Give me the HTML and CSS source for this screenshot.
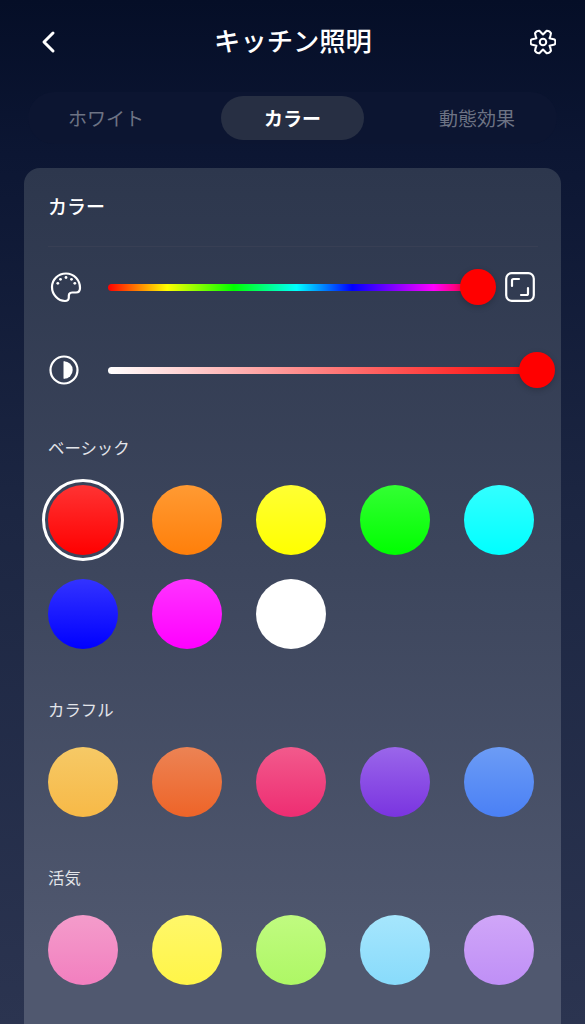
FILE: index.html
```html
<!DOCTYPE html>
<html lang="ja">
<head>
<meta charset="utf-8">
<title>キッチン照明</title>
<link rel="stylesheet" href="styles.css">
</head>
<body>
<div class="screen">
  <header class="topbar">
    <svg class="icon-back" viewBox="0 0 16 24" width="16" height="24"><path d="M13 3 L4 12 L13 21" fill="none" stroke="#fff" stroke-width="3" stroke-linecap="round" stroke-linejoin="round"/></svg>
    <h1 class="title">キッチン照明</h1>
    <svg class="icon-gear" viewBox="0 0 24 24" width="26" height="26" fill="none" stroke="#fff" stroke-width="1.9" stroke-linecap="round" stroke-linejoin="round"><path d="M22.76 9.71Q24.2 12 22.76 14.29Q20 15 18.06 15.5Q19 17.500 19.36 20.17Q18.100 22.570 15.400 22.460Q13.500 20.500 12 19Q10.500 20.500 8.600 22.460Q5.900 22.570 4.640 20.170Q5 17.500 5.940 15.500Q4 15 1.240 14.290Q-.2 12 1.240 9.710Q4 9 5.940 8.500Q5 6.500 4.640 3.830Q5.900 1.430 8.600 1.540Q10.500 3.500 12 5Q13.500 3.500 15.400 1.540Q18.100 1.430 19.360 3.830Q19 6.500 18.060 8.500Q20 9 22.760 9.710z"/><circle cx="12" cy="12" r="3"/></svg>
  </header>

  <nav class="tabs">
    <span class="tab">ホワイト</span>
    <span class="tab tab-active">カラー</span>
    <span class="tab">動態効果</span>
  </nav>

  <main class="card">
    <h2 class="card-title">カラー</h2>
    <div class="divider"></div>

    <div class="slider-row slider-row-hue">
      <svg class="row-icon" viewBox="0 0 32 32" width="32" height="32" fill="none" stroke="#fff" stroke-width="2.2" stroke-linecap="round" stroke-linejoin="round"><path d="M16 2.500C8 2.500 2 8.500 2 16s6 14 13 14c2.600 0 3.900-1.700 3.800-3.500-.2-3 .3-5 3.400-5h3.800c2.800 0 4-1.500 4-4.500C30 9 24 2.500 16 2.500z"/><g fill="#fff" stroke="none"><circle cx="7.800" cy="12.300" r="1.400"/><circle cx="10.500" cy="8.300" r="1.400"/><circle cx="16" cy="6.500" r="1.400"/><circle cx="21.500" cy="8.300" r="1.400"/><circle cx="24.800" cy="12.300" r="1.400"/></g></svg>
      <div class="track track-hue"><span class="thumb"></span></div>
      <svg class="fit-icon" viewBox="0 0 30 30" width="30" height="30" fill="none" stroke="#fff" stroke-linecap="round"><rect x="1.200" y="1.200" width="27.600" height="27.600" rx="5.500" stroke-width="2.200"/><path d="M7 14V8.500Q7 7 8.500 7H14M23 16v5.500Q23 23 21.500 23H16" stroke-width="2.200"/></svg>
    </div>

    <div class="slider-row slider-row-light">
      <svg class="row-icon" viewBox="0 0 30 30" width="30" height="30" fill="none"><circle cx="15" cy="15" r="13.500" stroke="#fff" stroke-width="2.200"/><path d="M15 6.300a8.700 8.700 0 0 1 0 17.400z" fill="#fff"/><path d="M15 6.300V23.700" stroke="#fff" stroke-width="1"/></svg>
      <div class="track track-light"><span class="thumb"></span></div>
    </div>

    <section class="group group-basic">
      <h3 class="group-label">ベーシック</h3>
      <div class="swatches">
        <span class="swatch swatch-selected s-red"></span>
        <span class="swatch s-orange"></span>
        <span class="swatch s-yellow"></span>
        <span class="swatch s-green"></span>
        <span class="swatch s-cyan"></span>
        <span class="swatch s-blue"></span>
        <span class="swatch s-magenta"></span>
        <span class="swatch s-white"></span>
      </div>
    </section>

    <section class="group">
      <h3 class="group-label">カラフル</h3>
      <div class="swatches">
        <span class="swatch c-1"></span>
        <span class="swatch c-2"></span>
        <span class="swatch c-3"></span>
        <span class="swatch c-4"></span>
        <span class="swatch c-5"></span>
      </div>
    </section>

    <section class="group">
      <h3 class="group-label">活気</h3>
      <div class="swatches">
        <span class="swatch v-1"></span>
        <span class="swatch v-2"></span>
        <span class="swatch v-3"></span>
        <span class="swatch v-4"></span>
        <span class="swatch v-5"></span>
      </div>
    </section>
  </main>
</div>
</body>
</html>
```
FILE: styles.css
```css
* { box-sizing: border-box; }
html, body { margin: 0; height: 100%; }
body {
  overflow: hidden;
  font-family: "Noto Sans CJK JP", "Noto Sans", sans-serif;
  color: #fff;
}
.screen {
  width: 585px;
  height: 1024px;
  overflow: hidden;
  padding: 0 24px;
  background: linear-gradient(180deg, #050e27 0%, #0c1633 15%, #1c2642 50%, #2b3450 100%);
}
.topbar {
  height: 82px;
  display: flex;
  align-items: center;
  justify-content: space-between;
  padding: 0 5px 0 16px;
}
.icon-back, .icon-gear { margin-top: 2px; }
.title {
  margin: 0 0 2px;
  font-size: 26.3px;
  font-weight: 500;
  line-height: 36px;
}
.tabs {
  margin: 10px 4px 0;
  height: 52px;
  padding: 4px 0;
  border-radius: 26px;
  background: #0c1531;
  display: grid;
  grid-template-columns: 156px 143px 152px;
  column-gap: 37px;
  align-items: center;
}
.tab {
  font-size: 19px;
  color: #6d7384;
  height: 44px;
  line-height: 44px;
  text-align: center;
  border-radius: 22px;
}
.tab-active {
  background: #272f43;
  color: #fff;
  font-weight: 700;
}
.card {
  margin-top: 24px;
  height: 900px;
  border-radius: 16px;
  padding: 23px 24px 0;
  background: linear-gradient(180deg, #2d374d 0%, #3d465d 45%, #50586f 88%);
}
.card-title {
  margin: 0;
  font-size: 19px;
  font-weight: 500;
  line-height: 30px;
}
.divider {
  margin-top: 25px;
  height: 1px;
  margin-right: -1px;
  background: #383f54;
}
.slider-row {
  display: flex;
  align-items: center;
  height: 36px;
  position: relative;
}
.slider-row-hue { margin-top: 22px; }
.slider-row-light { margin-top: 47px; }
.row-icon { flex: none; margin-left: 2px; }
.slider-row-light .row-icon { margin-left: 1px; }
.track {
  position: relative;
  height: 7px;
  border-radius: 4px;
  margin-left: 26px;
}
.slider-row-light .track { margin-left: 29px; }
.track-hue {
  width: 370px;
  background: linear-gradient(90deg, #f00 0%, #ff0 16%, #0f0 34%, #0ff 51%, #00f 66%, #f0f 88%, #f00 100%);
}
.track-light {
  width: 430px;
  background: linear-gradient(90deg, #fff 0%, #f00 100%);
}
.thumb {
  position: absolute;
  right: -18px;
  top: -14.5px;
  width: 36px;
  height: 36px;
  border-radius: 50%;
  background: #f00;
  box-shadow: 0 2px 6px rgba(0, 0, 0, .2);
}
.fit-icon {
  position: absolute;
  left: 457px;
  top: 3px;
}
.group { margin-top: 48px; }
.group-basic { margin-top: 47px; }
.group-label {
  margin: 0;
  font-size: 16.4px;
  font-weight: 400;
  line-height: 24px;
  color: #e3e5ea;
}
.swatches {
  margin: 26px 0 0 -0.5px;
  display: grid;
  grid-template-columns: repeat(5, 70px);
  column-gap: 34px;
  row-gap: 24px;
}
.swatch {
  position: relative;
  width: 70px;
  height: 70px;
  border-radius: 50%;
}
.swatch-selected::after {
  content: "";
  position: absolute;
  inset: -6px;
  border: 3px solid #fff;
  border-radius: 50%;
}
.s-red { background: linear-gradient(180deg, #ff3333, #ff0000); }
.s-orange { background: linear-gradient(180deg, #ff9a33, #ff7f0a); }
.s-yellow { background: linear-gradient(180deg, #ffff33, #ffff00); }
.s-green { background: linear-gradient(180deg, #33ff33, #00ff00); }
.s-cyan { background: linear-gradient(180deg, #33ffff, #00ffff); }
.s-blue { background: linear-gradient(180deg, #3333ff, #0000ff); }
.s-magenta { background: linear-gradient(180deg, #ff33ff, #ff00ff); }
.s-white { background: #fff; }
.c-1 { background: linear-gradient(180deg, #f6c966, #f7b947); }
.c-2 { background: linear-gradient(180deg, #ec8354, #ee6428); }
.c-3 { background: linear-gradient(180deg, #f25a8c, #ee2d72); }
.c-4 { background: linear-gradient(180deg, #9a66ea, #7a34e0); }
.c-5 { background: linear-gradient(180deg, #6c9cf5, #4a80f5); }
.v-1 { background: linear-gradient(180deg, #f49ccb, #f27fbf); }
.v-2 { background: linear-gradient(180deg, #fff76a, #fff548); }
.v-3 { background: linear-gradient(180deg, #c0fb80, #aef765); }
.v-4 { background: linear-gradient(180deg, #a6e6fd, #88dbfb); }
.v-5 { background: linear-gradient(180deg, #d0a6f8, #bf8ff6); }
```
